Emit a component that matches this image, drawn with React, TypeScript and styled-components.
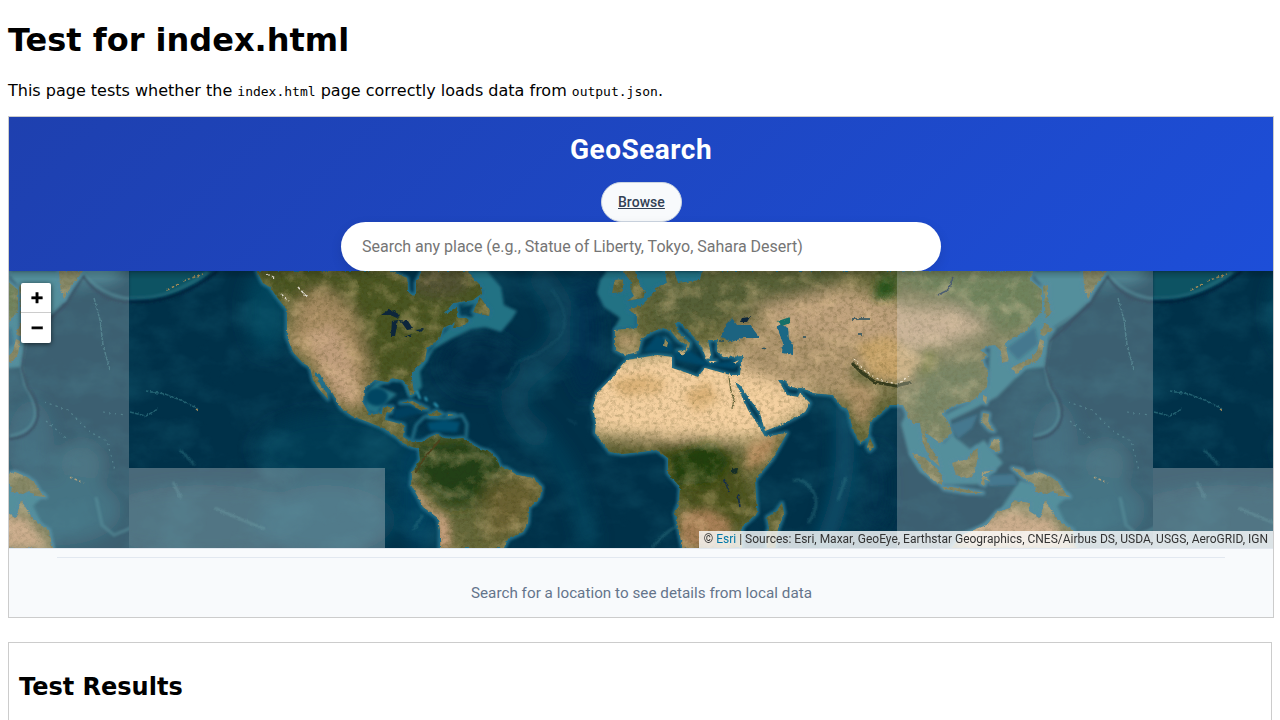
import React from "react";
import styled, { createGlobalStyle } from "styled-components";

const GlobalStyle = createGlobalStyle`
  body {
    margin: 0;
    background: #fff;
    color: #000;
    font-family: "DejaVu Sans", sans-serif;
    font-size: 16px;
  }
`;

const Page = styled.main`
  box-sizing: border-box;
  height: 720px;
  padding: 0 8px;
  overflow: hidden;
`;

const PageTitle = styled.h1`
  margin: 22px 0;
  font-size: 32px;
  line-height: 37px;
`;

const Intro = styled.p`
  margin: 0 0 15px;
  line-height: 19px;
`;

const Code = styled.code`
  font-family: "DejaVu Sans Mono", monospace;
  font-size: 13px;
`;

const Frame = styled.section`
  display: flex;
  flex-direction: column;
  width: 100%;
  height: 500px;
  border: 1px solid #ccc;
  background: #f8fafc;
  font-family: Roboto, sans-serif;
  overflow: hidden;
`;

const Header = styled.header`
  display: flex;
  flex-direction: column;
  align-items: center;
  height: 154px;
  flex: none;
  background: linear-gradient(135deg, #1e40af 0%, #1d4ed8 100%);
`;

const Brand = styled.div`
  margin: 16px 0 16px;
  color: #fff;
  font-size: 28px;
  font-weight: 700;
  line-height: 33px;
  letter-spacing: 0.5px;
`;

const BrowseLink = styled.a`
  box-sizing: border-box;
  width: 81px;
  height: 40px;
  padding-left: 16px;
  margin-left: 1px;
  border: 1px solid #cbd5e1;
  border-radius: 20px;
  background: #f8fafc;
  color: #334155;
  font-size: 14px;
  font-weight: 500;
  line-height: 38px;
  letter-spacing: 0.03px;
  text-decoration: underline;
`;

const SearchInput = styled.input`
  box-sizing: border-box;
  width: 600px;
  height: 49px;
  padding: 0 21px;
  border: 0;
  border-radius: 25px;
  background: #fff;
  box-shadow: 0 4px 12px rgba(0, 0, 0, 0.1);
  font-family: Roboto, sans-serif;
  font-size: 16px;
  letter-spacing: -0.015px;
  outline: none;
  &::placeholder {
    color: #757575;
  }
`;

const MapArea = styled.div`
  position: relative;
  height: 277px;
  flex: none;
  border-bottom: 1px solid #e2e8f0;
  overflow: hidden;
`;

const MapSvg = styled.svg`
  display: block;
`;

const ZoomControl = styled.div`
  position: absolute;
  top: 12px;
  left: 12px;
  display: flex;
  flex-direction: column;
  border-radius: 2px;
  background: #fff;
  box-shadow: 0 1px 5px rgba(0, 0, 0, 0.65);
`;

const ZoomButton = styled.div<{ $divided?: boolean }>`
  width: 30px;
  height: 30px;
  box-sizing: ${(p) => (p.$divided ? "border-box" : "content-box")};
  border-bottom: ${(p) => (p.$divided ? "1px solid #ccc" : "0")};
  color: #000;
  font: bold 20px/28px "DejaVu Sans Mono", monospace;
  -webkit-text-stroke: 0.4px #000;
  text-align: center;
  text-indent: 2px;
`;

const Attribution = styled.div`
  position: absolute;
  right: 0;
  bottom: 0;
  height: 17px;
  padding: 0 5px;
  background: rgba(255, 255, 255, 0.8);
  color: #333;
  font-size: 12px;
  line-height: 17px;
  letter-spacing: -0.005px;
  white-space: nowrap;
`;

const EsriLink = styled.a`
  color: #0078a8;
`;

const Details = styled.div`
  margin: 8px 48px 0;
  padding: 25px 0 0 1px;
  border-top: 1px solid #e2e8f0;
  color: #64748b;
  font-size: 15.2px;
  line-height: 21px;
  letter-spacing: 0.035px;
  text-align: center;
`;

const Results = styled.section`
  margin-top: 24px;
  padding: 10px;
  height: 90px;
  border: 1px solid #ccc;
`;

const ResultsTitle = styled.h2`
  margin: 20px 0;
  font-size: 24px;
  line-height: 28px;
`;

const AMERICAS =
  "M257 271L263 283 270 287 277 297 287 310 287 337 293 352 303 363 310 367 313 380 319 389 328 399 327 393 322 388 318 380 314 372 320 374 325 384 332 392 341 408 352 416 368 422 383 428 397 437 403 443 412 447 419 448 420 460 412 473 411 485 418 497 423 507 438 518 440 530 440 550H503L508 539 515 536 523 532 528 523 529 507 535 503 540 497 542 487 533 478 517 475 506 468 500 467 497 459 490 452 480 449 473 445 463 438 453 439 443 438 437 434 430 437 422 442 412 442 403 437 404 425 393 422 385 420 386 413 392 412 393 407 383 407 382 413 370 415 363 403 364 388 375 380 388 382 392 378 403 380 407 385 410 394 414 393 412 380 412 372 425 360 427 348 440 338 443 328 455 322 453 328 458 328 470 321 466 318 458 318 457 307 443 315 453 303 473 300 482 293 480 285 470 275 468 271H422L416 283 416 294 413 296 408 292 407 278 390 271Z";
const OLD_WORLD =
  "M665 271L667 283 657 287 650 297 642 305 628 310 637 315 637 328 615 330 615 350 625 355 638 352 642 338 652 332 663 328 670 330 678 340 687 345 685 353 689 347 690 343 678 332 675 323 680 322 695 338 703 350 707 360 711 356 708 340 718 340 717 350 723 357 743 356 740 375 730 375 705 368 698 377 687 373 672 368 672 357 657 355 627 360 613 377 597 393 593 407 596 423 595 433 610 452 623 454 640 452 657 450 668 458 668 473 680 487 679 503 675 513 683 550H742L742 527 757 513 755 480 773 458 787 433 765 437 760 428 748 410 735 382 740 385 747 395 760 413 765 431 780 425 792 419 805 412 810 403 800 393 798 397 787 395 778 380 785 380 790 387 802 388 813 393 833 395 842 407 848 410 853 429 860 443 868 437 870 422 890 405 903 405 912 423 920 423 923 443 929 457 940 467 937 457 927 442 925 432 940 443 952 433 948 422 942 413 950 407 973 400 987 387 988 373 982 360 987 355 981 350 986 346 995 345 1001 351 1002 363 1009 361 1005 343 1027 330 1042 310 1042 290 1030 280 1033 271H702L700 280 687 282 678 283 674 271Z";
const ISLANDS =
  "M623 271L635 271 639 284 645 292 643 298 627 301 634 296 630 289 631 282ZM612 293L615 280 623 279 623 292ZM473 312L480 297 487 307 490 310 489 316ZM400 403L412 401 428 409 420 410 410 403ZM430 414L436 411 443 414 438 416 429 416ZM448 414L455 415 448 416ZM1043 287L1048 285 1048 298 1051 313 1046 318ZM1040 334L1045 323 1053 330 1048 333 1043 336ZM1040 339L1044 341 1042 354 1037 361 1025 366 1016 374 1011 368 1020 363 1031 358 1037 351ZM1083 271L1107 271 1095 287 1088 299 1084 286ZM983 395L987 397 986 404 983 400ZM983 413L989 414 988 422 994 431 990 430 982 422ZM992 440L999 439 1000 451 995 452 990 447ZM952 463L958 461 967 460 972 453 977 448 978 456 976 467 972 477 966 478 956 475ZM912 453L917 454 927 460 937 469 942 477 942 485 934 481 923 470ZM942 487L952 487 973 491 983 493 968 493 944 489ZM982 472L994 470 983 475 991 482 984 479 985 485 981 484ZM1012 468L1022 470 1026 476 1039 472 1051 477 1058 482 1064 492 1070 497 1060 496 1053 491 1047 494 1036 492 1034 484 1022 477ZM960 537L969 532 987 525 997 512 1010 508 1013 500 1030 503 1029 511 1040 518 1045 500 1053 513 1061 523 1073 530 1077 550H950ZM782 503L784 513 778 529 775 550H767L766 536 769 528 767 517 776 512ZM870 438L874 447 870 451 867 447ZM665 339L668 342 667 347 664 346ZM677 351L685 350 684 355ZM733 363L739 360 735 364ZM709 361L717 361 710 363Z";
const SHELVES =
  "M640 271H704V283L667 287 650 301 636 313 636 328 613 330 620 318 604 307 597 293 600 280 607 271ZM468 271L487 271 501 287 504 305 517 311 512 319 501 332 485 327 471 329 451 339 434 349 420 372 422 387 410 399 407 392 404 384 395 378 376 382 365 393 366 410 377 414 382 406 397 394 387 390 378 387 388 381 406 382 411 370 425 357 439 338 450 326 472 317 480 303 459 307 475 299 483 292ZM990 345L1010 340 1030 325 1043 306 1043 287 1030 271H1085L1090 300 1073 315 1050 330 1044 367 1025 369 997 397 970 411 949 421 955 437 970 449 984 440 1003 463 982 484 945 485 920 472 909 455 901 424 908 410 926 431 944 443 953 433 944 415 970 402 988 385ZM960 540L983 524 1000 510 1020 480 1070 494 1057 506 1078 548H950Z";

const EarthDefs = () => (
  <defs>
    <filter id="coast" x="-2%" y="-10%" width="104%" height="120%">
      <feTurbulence type="fractalNoise" baseFrequency="0.3" numOctaves={3} seed={8} />
      <feDisplacementMap in="SourceGraphic" scale={3} xChannelSelector="R" yChannelSelector="G" />
    </filter>
    <filter id="soft2"><feGaussianBlur stdDeviation="1.7" /></filter>
    <filter id="soft1"><feGaussianBlur stdDeviation="1" /></filter>
    <filter id="soft8" x="-60%" y="-60%" width="220%" height="220%"><feGaussianBlur stdDeviation="8" /></filter>
    <filter id="soft5" x="-60%" y="-60%" width="220%" height="220%"><feGaussianBlur stdDeviation="4.5" /></filter>
    <filter id="seaNoise" x="0" y="0" width="100%" height="100%" colorInterpolationFilters="sRGB">
      <feTurbulence type="fractalNoise" baseFrequency="0.02 0.03" numOctaves={6} seed={13} />
      <feColorMatrix values="0 0 0 0 .12  0 0 0 0 .43  0 0 0 0 .51  1.8 0 0 0 -.75" />
    </filter>
    <filter id="landDark" x="0" y="0" width="100%" height="100%" colorInterpolationFilters="sRGB">
      <feTurbulence type="fractalNoise" baseFrequency="0.24 0.28" numOctaves={4} seed={4} />
      <feColorMatrix values="0 0 0 0 .2  0 0 0 0 .2  0 0 0 0 .03  2.2 0 0 0 -.95" />
    </filter>
    <filter id="landLight" x="0" y="0" width="100%" height="100%" colorInterpolationFilters="sRGB">
      <feTurbulence type="fractalNoise" baseFrequency="0.05 0.06" numOctaves={6} seed={21} />
      <feColorMatrix values="0 0 0 0 1  0 0 0 0 .86  0 0 0 0 .66  0 2.2 0 0 -1" />
    </filter>
    <clipPath id="landClip"><path d={AMERICAS + OLD_WORLD + ISLANDS} /></clipPath>
    <clipPath id="worldClip"><rect x="129" y="271" width="1024" height="277" /></clipPath>
    <linearGradient id="topShade" x1="0" y1="0" x2="0" y2="1">
      <stop offset="0" stopColor="#000" stopOpacity=".2" />
      <stop offset="1" stopColor="#000" stopOpacity="0" />
    </linearGradient>
    <g id="world" clipPath="url(#worldClip)">
      <rect x="129" y="271" width="1024" height="277" fill="#003149" />
      <g filter="url(#soft8)">
        <ellipse cx="267" cy="310" rx="22" ry="45" fill="#05425a" />
        <ellipse cx="340" cy="450" rx="85" ry="38" fill="#003a52" />
        <ellipse cx="205" cy="520" rx="110" ry="35" fill="#0a4359" />
        <ellipse cx="325" cy="520" rx="70" ry="35" fill="#0b4c63" />
        <ellipse cx="420" cy="495" rx="23" ry="55" fill="#033f5d" />
        <path d="M535 271Q590 330 538 365T545 440" fill="none" stroke="#0f5067" strokeWidth="26" opacity=".55" />
        <path d="M545 440Q575 470 590 548" fill="none" stroke="#0b526f" strokeWidth="20" opacity=".35" />
        <ellipse cx="480" cy="365" rx="40" ry="30" fill="#002944" />
        <ellipse cx="585" cy="335" rx="15" ry="60" fill="#002f4d" />
        <path d="M844 405Q852 490 820 550" fill="none" stroke="#0d506b" strokeWidth="18" />
        <ellipse cx="875" cy="488" rx="15" ry="43" fill="#002f48" />
        <ellipse cx="1105" cy="465" rx="24" ry="24" fill="#124f64" />
        <ellipse cx="1085" cy="510" rx="60" ry="35" fill="#114d63" />
        <ellipse cx="1055" cy="443" rx="23" ry="42" fill="#0b465f" />
        <ellipse cx="1120" cy="269" rx="29" ry="15" fill="#287385" />
      </g>
      <rect x="129" y="271" width="1024" height="277" filter="url(#seaNoise)" opacity=".38" />
      <path d="M129 297Q174 302 213 271H129Z" fill="#0c5363" filter="url(#soft2)" />
      <path d="M129 298Q155 299 174 291T208 272M1105 271Q1125 296 1155 299M1105 273L1089 299 1067 320 1052 330 1045 365 1049 385Q1063 407 1058 420T1034 436M1120 497L1126 525 1138 535 1157 527" fill="none" stroke="#2b7988" strokeWidth="3.5" opacity=".5" filter="url(#soft1)" />
      <path d="M129 302Q174 306 218 271M1107 276Q1125 303 1155 302M1108 275L1090 304 1066 327 1049 342 1046 368 1052 388Q1067 408 1060 423T1033 439" fill="none" stroke="#00213b" strokeWidth="2.2" filter="url(#soft1)" />
      <g fill="none" stroke="#3e8791" filter="url(#coast)" opacity=".55">
        <path d="M1118 298L1124 320 1127 345 1134 370" strokeWidth="1.5" strokeDasharray="4 1" />
        <path d="M145 391L165 394 183 401 198 409M130 412L146 416 158 409" strokeWidth="1.5" strokeDasharray="4 1" />
        <path d="M1068 402L1092 410 1114 432 1131 441 1139 470M1070 421L1090 438M1127 412L1150 415" strokeWidth="1.2" strokeDasharray="2 4" />
        <g filter="url(#soft1)">
          <path d="M173 482L181 498M215 508L240 519 265 529M180 450L195 465" strokeWidth="2" />
          <path d="M793 481Q804 476 814 493Q820 507 808 523M846 477L838 500M652 548Q666 531 677 526M413 530L423 515" strokeWidth="2.5" opacity=".7" />
          <path d="M552 290Q574 318 558 339L538 354 517 362 507 380M567 419L577 424" strokeWidth="2" opacity=".35" />
        </g>
      </g>
      <path d={SHELVES} fill="#247284" filter="url(#soft2)" />
      <path d={AMERICAS + OLD_WORLD + ISLANDS} fill="#207086" stroke="#22708a" strokeWidth="4.5" strokeLinejoin="round" filter="url(#soft2)" />
      <path d="M412 440L416 425 425 416 444 419 462 415 467 424 466 438" fill="none" stroke="#207087" strokeWidth="3" filter="url(#soft2)" />
      <g filter="url(#soft2)">
        <ellipse cx="377" cy="397" rx="11" ry="9" fill="#034462" />
        <path d="M394 409L410 406 426 412 405 417 394 420Z" fill="#04405e" />
        <path d="M427 423L444 420 460 422 457 432 430 431Z" fill="#055071" />
        <path d="M644 351L657 335 671 343 676 360 700 365 735 369 737 360 710 364 690 351 674 352 655 352Z" fill="#06486b" />
        <path d="M1007 348L1035 327 1038 344 1018 360ZM949 425L978 414 972 428 958 439ZM990 475L1014 474 1018 485 989 486Z" fill="#0a5272" />
      </g>
      <path d="M417 391L420 399M425 397L427 401M434 403L438 407" fill="none" stroke="#35a8c5" strokeWidth="2" filter="url(#soft1)" />
      <g filter="url(#coast)">
        <g clipPath="url(#landClip)">
          <rect x="129" y="271" width="1024" height="277" fill="#65683a" />
          <g filter="url(#soft8)">
            <path d="M250 265H490V310L425 355 408 387 370 380 345 330 295 320Z" fill="#4a5522" />
            <path d="M323 288L351 310 367 360 366 410 342 410 303 355 284 345 300 300Z" fill="#a98d63" />
            <path d="M415 442L470 436 510 467 487 500 450 508 415 480Z" fill="#243f12" />
            <path d="M485 490L540 470 535 515 490 545Z" fill="#6b6231" />
            <ellipse cx="440" cy="281" rx="32" ry="17" fill="#535334" />
            <path d="M575 360L690 350 760 355 820 405 760 441 590 434Z" fill="#f4d0a0" />
            <path d="M730 325L880 310 900 390 835 400 740 370Z" fill="#ad946d" />
            <path d="M655 271H850L830 296 750 318 650 330Z" fill="#566039" />
            <path d="M750 308L850 286 910 306 970 307 1000 323 960 341 910 355 865 344 785 332Z" fill="#c0a27d" />
            <path d="M870 265H1045V320L1002 333 950 304Z" fill="#47622f" />
            <path d="M900 368L985 359 984 392 947 408 955 450 912 425Z" fill="#56673a" />
            <path d="M590 445L670 438 735 445 739 463 757 513 732 530 685 510 665 464Z" fill="#4a511f" />
          </g>
          <g filter="url(#soft5)">
            <path d="M306 335L330 323 344 339 354 368 359 403 340 399 326 377Z" fill="#c09e7b" />
            <path d="M670 456L712 441 730 462 713 483 675 485Z" fill="#203f0c" />
            <path d="M748 443L780 433 768 460 745 472Z" fill="#b28a5d" />
            <path d="M615 332L640 334 636 350 616 348Z" fill="#ae956a" />
            <path d="M844 386L866 377 876 400 865 425 855 420Z" fill="#a48961" />
            <path d="M680 513L707 508 730 520 731 548H680Z" fill="#a77f57" />
            <path d="M610 380L647 374 667 383 656 394 621 396ZM683 395L707 381 719 400 696 412Z" fill="#dcb278" />
            <path d="M856 345L888 335 920 357 910 382 872 376Z" fill="#c8a46b" />
            <path d="M851 364L886 383 929 377 917 391 880 391 852 380Z" fill="#737347" />
            <path d="M921 353L935 350 937 365 919 379Z" fill="#666d27" />
            <path d="M960 531L1013 509 1030 517 1049 517 1073 548H960Z" fill="#c59b70" />
            <path d="M410 479L430 505 448 518 452 548H437L437 520 415 499Z" fill="#d0a684" />
            <path d="M880 275L895 278 894 298 874 299Z" fill="#28551c" />
          </g>
          <rect x="129" y="271" width="1024" height="277" filter="url(#landDark)" opacity=".28" />
          <rect x="129" y="271" width="1024" height="277" filter="url(#landLight)" opacity=".35" />
          <path d="M852 363L862 373 875 382 896 386 912 382" fill="none" stroke="#343b1d" strokeWidth="3" />
          <path d="M854 359L867 373 882 381 898 384 909 376" fill="none" stroke="#eee0c5" strokeWidth="1.3" strokeDasharray="2 3" />
          <path d="M267 274L275 278M281 294L289 301M298 287L307 297" fill="none" stroke="#dedace" strokeWidth="1.6" strokeDasharray="3 2" />
          <path d="M415 473L424 458 440 440" fill="none" stroke="#4e421c" strokeWidth="2" />
          <path d="M729 377L731 392 734 399 732 409" fill="none" stroke="#626136" strokeWidth="1.1" />
        </g>
        <path d="M721 337L726 324 732 318 737 325 750 325 760 338 743 338 731 342Z" fill="#1e6380" />
        <path d="M777 327L780 324 788 328 789 339 793 345 793 355 782 353 783 343Z" fill="#1a6785" />
        <path d="M778 321L790 317 790 323 782 326Z" fill="#176f67" />
        <path d="M742 318L750 317 747 322 740 322ZM381 315L390 309 400 315 397 318 390 315ZM392 321L398 320 395 336 391 336ZM398 320L408 321 413 329 407 330 402 323ZM415 330L424 329 421 332ZM404 337L412 334 409 337Z" fill="#07253b" />
        <path d="M731 469L738 468 737 474 731 473Z" fill="#142e28" />
        <path d="M724 478L729 492M738 495L740 507M938 295L948 290 953 277" fill="none" stroke="#182f49" strokeWidth="1.6" />
        <path d="M852 319L870 319M858 334L862 334M803 337L806 337M719 341L724 341M763 348L765 349" stroke="#244e5c" strokeWidth="1.3" />
        <path d="M183 281L203 274M167 290L179 284M196 409L199 411M1094 477L1108 483" stroke="#a48b58" strokeWidth="1.5" strokeDasharray="3 2" />
      </g>
    </g>
  </defs>
);

const SatelliteMap = () => (
  <MapSvg width="1264" height="277" viewBox="9 271 1264 277" aria-label="Satellite world map">
    <EarthDefs />
    <use href="#world" />
    <use href="#world" x="-1024" />
    <use href="#world" x="1024" />
    <g fill="#ddd" shapeRendering="crispEdges">
      <rect x="9" y="271" width="120" height="277" opacity=".27" />
      <rect x="129" y="468" width="256" height="80" opacity=".33" />
      <rect x="897" y="271" width="256" height="277" opacity=".27" />
      <rect x="1153" y="468" width="120" height="80" opacity=".33" />
    </g>
    <rect x="9" y="271" width="1264" height="8" fill="url(#topShade)" />
  </MapSvg>
);

export default function App() {
  return (
    <Page>
      <GlobalStyle />
      <PageTitle>Test for index.html</PageTitle>
      <Intro>
        This page tests whether the <Code>index.html</Code> page correctly loads data from <Code>output.json</Code>.
      </Intro>
      <Frame>
        <Header>
          <Brand>GeoSearch</Brand>
          <BrowseLink>Browse</BrowseLink>
          <SearchInput placeholder="Search any place (e.g., Statue of Liberty, Tokyo, Sahara Desert)" />
        </Header>
        <MapArea>
          <SatelliteMap />
          <ZoomControl>
            <ZoomButton $divided>+</ZoomButton>
            <ZoomButton>−</ZoomButton>
          </ZoomControl>
          <Attribution>
            © <EsriLink>Esri</EsriLink> | Sources: Esri, Maxar, GeoEye, Earthstar Geographics, CNES/Airbus DS, USDA, USGS, AeroGRID, IGN
          </Attribution>
        </MapArea>
        <Details>Search for a location to see details from local data</Details>
      </Frame>
      <Results>
        <ResultsTitle>Test Results</ResultsTitle>
      </Results>
    </Page>
  );
}
